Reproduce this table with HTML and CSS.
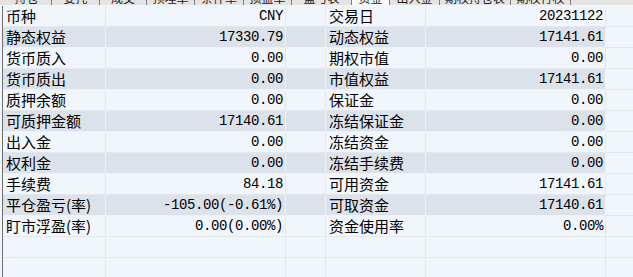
FILE: index.html
```html
<!DOCTYPE html>
<html lang="zh-CN">
<head>
<meta charset="utf-8">
<title>资金</title>
<link rel="stylesheet" href="styles.css">
</head>
<body>
<div class="tabs">
  <span class="tab w50">持仓</span>
  <span class="tab w48">委托</span>
  <span class="tab w47">成交</span>
  <span class="tab w48">预埋单</span>
  <span class="tab w49">条件单</span>
  <span class="tab w48">损益单</span>
  <span class="tab w60">盈亏表</span>
  <span class="tab active w38">资金</span>
  <span class="tab w50">出入金</span>
  <span class="tab w71">期权持仓表</span>
  <span class="tab w60">期权行权</span>
  <span class="tab wrest"></span>
</div>
<div class="grid">
  <div class="row"><div class="c lab">币种</div><div class="c val">CNY</div><div class="c"></div><div class="c lab">交易日</div><div class="c val">20231122</div><div class="c pad"></div></div>
  <div class="row alt"><div class="c lab">静态权益</div><div class="c val">17330.79</div><div class="c"></div><div class="c lab">动态权益</div><div class="c val">17141.61</div><div class="c pad"></div></div>
  <div class="row"><div class="c lab">货币质入</div><div class="c val">0.00</div><div class="c"></div><div class="c lab">期权市值</div><div class="c val">0.00</div><div class="c pad"></div></div>
  <div class="row alt"><div class="c lab">货币质出</div><div class="c val">0.00</div><div class="c"></div><div class="c lab">市值权益</div><div class="c val">17141.61</div><div class="c pad"></div></div>
  <div class="row"><div class="c lab">质押余额</div><div class="c val">0.00</div><div class="c"></div><div class="c lab">保证金</div><div class="c val">0.00</div><div class="c pad"></div></div>
  <div class="row alt"><div class="c lab">可质押金额</div><div class="c val">17140.61</div><div class="c"></div><div class="c lab">冻结保证金</div><div class="c val">0.00</div><div class="c pad"></div></div>
  <div class="row"><div class="c lab">出入金</div><div class="c val">0.00</div><div class="c"></div><div class="c lab">冻结资金</div><div class="c val">0.00</div><div class="c pad"></div></div>
  <div class="row alt"><div class="c lab">权利金</div><div class="c val">0.00</div><div class="c"></div><div class="c lab">冻结手续费</div><div class="c val">0.00</div><div class="c pad"></div></div>
  <div class="row"><div class="c lab">手续费</div><div class="c val">84.18</div><div class="c"></div><div class="c lab">可用资金</div><div class="c val">17141.61</div><div class="c pad"></div></div>
  <div class="row alt"><div class="c lab">平仓盈亏(率)</div><div class="c val">-105.00(-0.61%)</div><div class="c"></div><div class="c lab">可取资金</div><div class="c val">17140.61</div><div class="c pad"></div></div>
  <div class="row"><div class="c lab">盯市浮盈(率)</div><div class="c val">0.00(0.00%)</div><div class="c"></div><div class="c lab">资金使用率</div><div class="c val">0.00%</div><div class="c pad"></div></div>
  <div class="row"><div class="c"></div><div class="c"></div><div class="c"></div><div class="c"></div><div class="c"></div><div class="c pad"></div></div>
  <div class="row"><div class="c"></div><div class="c"></div><div class="c"></div><div class="c"></div><div class="c"></div><div class="c pad"></div></div>
</div>
</body>
</html>
```
FILE: styles.css
```css
html, body {
  margin: 0;
  padding: 0;
  background: #f0f6fc;
  overflow: hidden;
}

body {
  width: 633px;
  height: 277px;
  font-family: "Noto Sans CJK SC", "Liberation Sans", sans-serif;
  color: #000;
}

.tabs {
  display: flex;
  height: 5px;
  overflow: hidden;
  background: #e4e4e4;
  border-bottom: 1px solid #f0f6fc;
  padding-left: 2px;
}

.tab {
  box-sizing: border-box;
  display: block;
  height: 5px;
  border-right: 1px solid #7c7c7c;
  font-size: 12px;
  line-height: 12px;
  text-align: center;
  color: #222;
  overflow: hidden;
}

.tab::before {
  content: "";
  display: block;
  margin-top: -8px;
}

.tab.active {
  background: #fafafa;
}

.w50 { width: 50px; }
.w48 { width: 48px; }
.w47 { width: 47px; }
.w49 { width: 49px; }
.w60 { width: 60px; }
.w38 { width: 38px; }
.w71 { width: 71px; }
.wrest { flex: 1; border-right: none; }

.grid {
  margin-left: 2px;
  border-left: 1px solid #6e6e6e;
}

.row {
  display: grid;
  grid-template-columns: 103px 180px 40px 100px 180px 1fr;
  height: 21px;
}

.c {
  box-sizing: border-box;
  height: 21px;
  border-right: 1px solid #e3e8ee;
  border-bottom: 1px solid #e3e8ee;
  white-space: nowrap;
  overflow: hidden;
}

.row.alt .c {
  background: #dce2e9;
  border-bottom-color: #eef2f7;
  border-right-color: #eef2f7;
}

.row .c.pad,
.row.alt .c.pad {
  background: #f0f6fc;
  border-right: none;
  border-bottom-color: #e3e8ee;
}

.lab {
  font-size: 15px;
  line-height: 20px;
  padding-left: 3px;
}

.val {
  font-family: "Liberation Mono", "DejaVu Sans Mono", monospace;
  font-size: 14px;
  letter-spacing: -0.4px;
  line-height: 21px;
  text-align: right;
  padding-right: 2px;
}
```
